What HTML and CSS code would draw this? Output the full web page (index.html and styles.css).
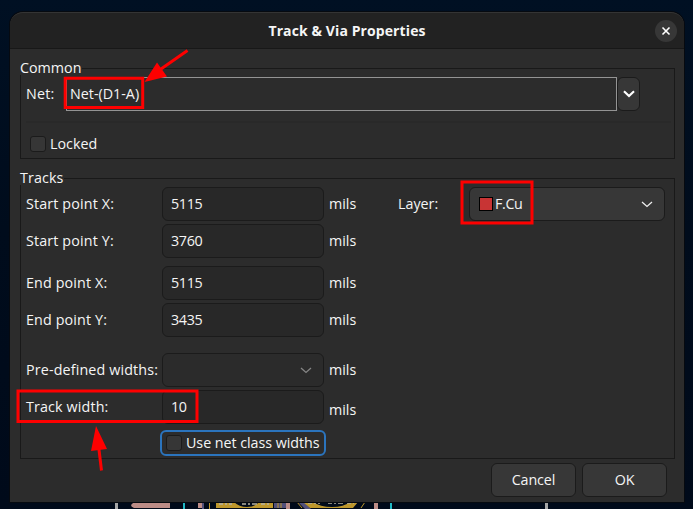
FILE: index.html
```html
<!DOCTYPE html>
<html lang="en">
<head>
<meta charset="utf-8">
<title>Track &amp; Via Properties</title>
<link rel="stylesheet" href="styles.css">
</head>
<body>
<svg class="board" width="693" height="7" viewBox="0 0 693 7">
  <path fill="#a5a5a5" d="M115 0h3v7h-3zM545 0h3v7h-3z"/>
  <path fill="#bc8c86" d="M170 1v5h-36q-3-1-3-3l2-2zM198 0h4v6h-4zM286 0h4v7h-4zM374 0h4v7h-4z"/>
  <path fill="#20b9c5" d="M183 0h2v7h-2zM390 0h2v7h-2z"/>
  <path fill="#52507a" d="M202 0h2v7h-2zM274 0h12v6h-12zM298 0h6l7 7h-6z"/>
  <path fill="#bd972c" d="M209 0h1v7h-1zM216 0h57v6h-57zM303 0h55l-5 6h-43z"/>
  <path fill="#020c1b" d="M234 0h25q-4 5-12 5t-13-5zM313 0h37q-6 5-18 5t-19-5z"/>
  <path fill="none" stroke="#bd972c" d="M278 0v6M281 0v6M297 0l5 6M365 0l-4 6"/>
  <path fill="none" stroke="#b5b0a0" stroke-width="2" stroke-opacity=".75" stroke-dasharray="4 2 2 2 5 4" d="M219 2h13M242 2h29M308 1h12M328 1h26"/>
</svg>
<main class="dialog">
  <header class="titlebar">
    <h1>Track &amp; Via Properties</h1>
    <button class="close" aria-label="Close"><svg width="10" height="10" viewBox="0 0 10 10"><path d="M1.500 1.500l7 7M8.500 1.500l-7 7"/></svg></button>
  </header>

  <section class="group common">
    <h2 class="legend">Common</h2>
    <div class="net-row">
      <span class="label">Net:</span>
      <div class="net-field"><span>Net-(D1-A)</span></div>
      <button class="net-drop" aria-label="Choose net"><svg width="12" height="8" viewBox="0 0 12 8"><path d="M1 1.300l5 4.700 5-4.700"/></svg></button>
    </div>
    <div class="separator"></div>
    <div class="check locked"><i class="box"></i><span>Locked</span></div>
  </section>

  <section class="group tracks">
    <h2 class="legend legend-tracks">Tracks</h2>
    <div class="form">
      <span class="label">Start point X:</span><div class="entry">5115</div><span class="unit">mils</span>
      <span class="label">Start point Y:</span><div class="entry">3760</div><span class="unit">mils</span>
      <span class="label">End point X:</span><div class="entry">5115</div><span class="unit">mils</span>
      <span class="label">End point Y:</span><div class="entry">3435</div><span class="unit">mils</span>
      <span class="label predefined">Pre-defined widths:</span><div class="entry select"><svg class="chevron" width="12" height="7" viewBox="0 0 12 7"><path d="M1 1l5 4.500L11 1"/></svg></div><span class="unit">mils</span>
      <span class="label track-width">Track width:</span><div class="entry">10</div><span class="unit low">mils</span>
      <div class="check netclass"><i class="box"></i><span>Use net class widths</span></div>
    </div>
    <div class="layer">
      <span class="label">Layer:</span>
      <div class="combo"><i class="swatch"></i><span>F.Cu</span><svg class="chevron" width="12" height="7" viewBox="0 0 12 7"><path d="M1 1l5 4.500L11 1"/></svg></div>
    </div>
  </section>

  <footer class="actions">
    <button class="btn cancel">Cancel</button>
    <button class="btn ok">OK</button>
  </footer>
</main>

<svg class="marks" width="693" height="509" viewBox="0 0 693 509">
  <g fill="none" stroke="#fe0000" stroke-width="3">
    <path d="M65.200 78.200h77.500v29.300H65.200zM462 182h70v41h-70zM18 391h179v30.500H18z"/>
    <path d="M187.500 50.500L161 69M101.500 470.500L98.800 448"/>
  </g>
  <path fill="#fe0000" d="M144.500 82l12.500-19.500 10 14zM96 426l11 23-16 2z"/>
</svg>
</body>
</html>
```
FILE: styles.css
```css
* { box-sizing: border-box; }

body {
  margin: 0;
  width: 693px;
  height: 509px;
  overflow: hidden;
  position: relative;
  padding: 12px 9px 0 10px;
  background: linear-gradient(#001023, #000c1c 45%, #000a1a);
  color: #f5f5f5;
  font: 14.3px/20px "Open Sans", "Noto Sans", sans-serif;
}

button {
  margin: 0;
  padding: 0;
  color: inherit;
  font: inherit;
}

svg { display: block; }
h1, h2 { margin: 0; }

.board { position: absolute; left: 0; top: 502px; }
.marks { position: absolute; left: 0; top: 0; }

.dialog {
  position: relative;
  width: 674px;
  height: 490px;
  display: flex;
  flex-direction: column;
  background: #2c2c2c;
  border-radius: 13px 13px 0 0;
  box-shadow: 0 0 0 1px #060a10;
  overflow: hidden;
}

.titlebar {
  height: 37px;
  flex: none;
  display: grid;
  grid-template-columns: 40px 1fr 40px;
  align-items: center;
  background: #222;
  border-top: 1px solid #343434;
  border-bottom: 1px solid #181818;
  border-radius: 13px 13px 0 0;
}
.titlebar h1 {
  grid-column: 2;
  text-align: center;
  font-size: 14px;
  font-weight: 700;
  line-height: 20px;
  letter-spacing: 0.1px;
}
.close {
  width: 22px;
  height: 22px;
  margin-left: 11px;
  border: 0;
  border-radius: 50%;
  background: #373737;
  display: grid;
  place-items: center;
}
.close path { fill: none; stroke: #fff; stroke-width: 1.6; }

.group {
  position: relative;
  flex: none;
  width: 655px;
  margin-left: 10px;
  border: 1px solid #191919;
}
.legend {
  position: absolute;
  left: -1px;
  top: -11px;
  height: 17px;
  padding-right: 1px;
  background: #2c2c2c;
  font-size: 14.3px;
  line-height: 20px;
  font-weight: 400;
}
.legend-tracks { letter-spacing: 0.1px; }

.common { height: 91px; margin-top: 19px; padding: 8px 3px 0 5px; }
.net-row { display: flex; height: 34px; align-items: center; }
.net-row .label { width: 40px; letter-spacing: 0.2px; }
.net-field {
  width: 551px;
  height: 34px;
  padding: 6px 3px;
  border: 1px solid #949494;
}
.net-drop {
  width: 23px;
  height: 34px;
  border: 1px solid #1b1b1b;
  border-radius: 6px;
  background: #373737;
  display: grid;
  place-items: center;
}
.net-drop path { fill: none; stroke: #fff; stroke-width: 2.2; }
.separator { height: 2px; margin-top: 10px; background: #292929; }

.check { display: flex; align-items: center; }
.box {
  width: 16px;
  height: 16px;
  border: 1px solid #1b1b1b;
  border-radius: 3px;
  background: #363636;
}
.locked { gap: 4px; padding-left: 4px; margin-top: 11px; }

.tracks {
  height: 281px;
  margin-top: 19px;
  padding: 8px 9px 0 5px;
  display: flex;
  justify-content: space-between;
  align-items: flex-start;
}
.form {
  display: grid;
  grid-template-columns: 136px 162px 34px;
  grid-template-rows: 34px 34px 34px 34px 34px 34px 26px;
  row-gap: 3px;
  align-items: center;
}
.form .label { letter-spacing: 0.14px; white-space: nowrap; }
.form > :nth-child(n+7) { position: relative; top: 5px; }
.form > :nth-child(n+13) { top: 18px; }
.form > .netclass { top: 21px; }
.entry {
  height: 34px;
  padding: 6px 8px;
  border: 1px solid #1b1b1b;
  border-radius: 6px;
  background: #282828;
  letter-spacing: -0.35px;
}
.unit { padding-left: 5px; }
.form > .low { top: 21px; }
.select {
  display: flex;
  align-items: center;
  justify-content: flex-end;
  padding-right: 11px;
  background: #2b2b2b;
}
.chevron path { fill: none; stroke: #eee; stroke-width: 1.3; }
.select .chevron path { stroke: #858585; }
.netclass {
  grid-column: 2 / 4;
  width: 166px;
  height: 26px;
  margin-left: -2px;
  padding-left: 4px;
  gap: 4px;
  border: 2px solid #2b74bd;
  border-radius: 6px;
  white-space: nowrap;
  letter-spacing: -0.05px;
}

.layer { display: flex; align-items: center; }
.layer .label { width: 71px; }
.combo {
  width: 196px;
  height: 34px;
  padding: 0 11px 0 9px;
  display: flex;
  align-items: center;
  border: 1px solid #1b1b1b;
  border-radius: 6px;
  background: #373737;
  letter-spacing: -0.35px;
}
.swatch {
  width: 14px;
  height: 14px;
  margin-right: 2px;
  border: 1px solid #000;
  background: #c83434;
}
.combo .chevron { margin-left: auto; }

.actions {
  display: flex;
  justify-content: flex-end;
  gap: 6px;
  padding: 4px 17px 0 0;
}
.btn {
  width: 85px;
  height: 34px;
  border: 1px solid #1b1b1b;
  border-radius: 6px;
  background: #373737;
  letter-spacing: -0.1px;
}
```
